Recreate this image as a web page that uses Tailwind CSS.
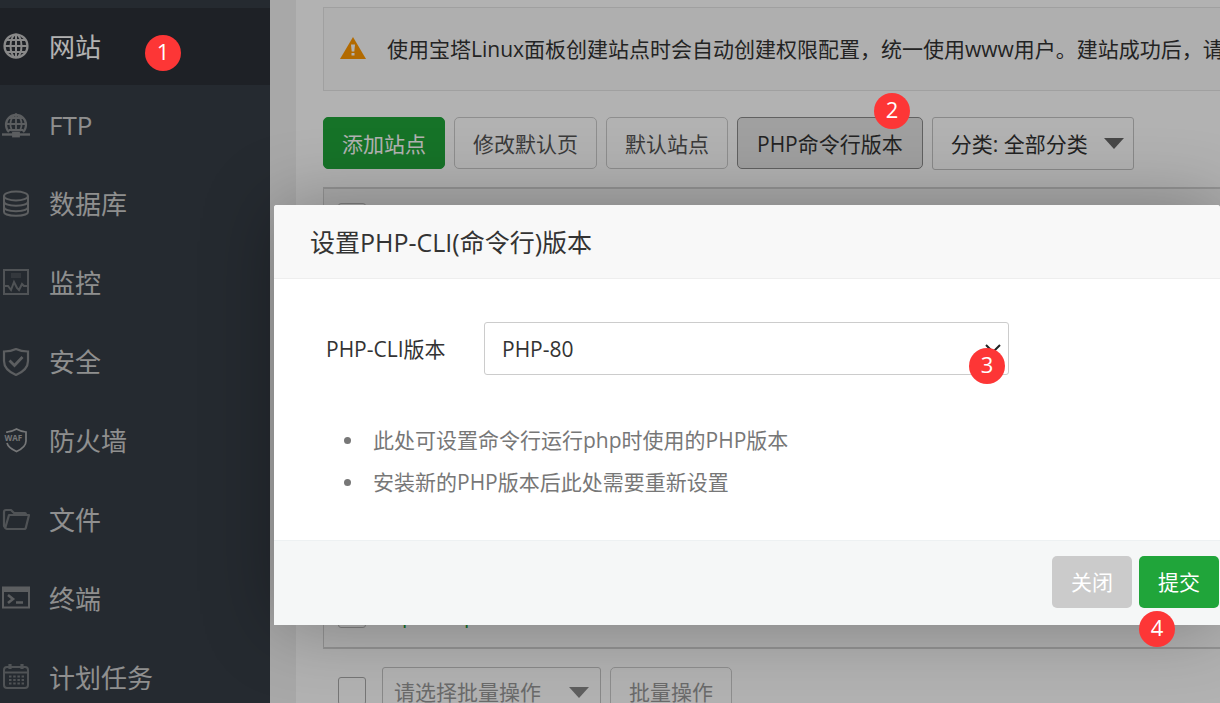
<!DOCTYPE html>
<html lang="zh-CN">
<head>
  <meta charset="UTF-8" />
  <title>网站 - 宝塔Linux面板</title>
  <meta name="viewport" content="width=device-width, initial-scale=1" />
  <script src="https://cdn.jsdelivr.net/npm/@tailwindcss/browser@4"></script>
  <style>
    body {
      font-family: "Open Sans", "Noto Sans CJK SC", sans-serif;
    }
  </style>
</head>
<body class="relative h-screen overflow-hidden bg-[#f1f1f1] text-[21px] leading-[30px] text-[#333]">

  <div class="flex h-full">
    <!-- SIDEBAR -->
    <nav class="w-[270px] shrink-0 bg-[#363d45] pt-2 text-[26px] leading-[36px] text-[#cdcdcd]">
      <a href="#" class="mb-px flex h-[77px] items-center gap-[19px] bg-[#2c3037] pl-[2px] pt-px text-white">
        <svg class="h-[28px] w-[28px] text-[#c4c4c4]" viewBox="0 0 28 28" fill="none" stroke="currentColor" stroke-width="2"><circle cx="14" cy="13" r="11.500" stroke-width="2.200" /><ellipse cx="14" cy="13" rx="5.500" ry="11.500" /><path d="M14 1v24M2 13h24M4 7h20M4 19h20" /></svg>
        网站
      </a>
      <a href="#" class="flex h-[79px] items-center gap-[19px] pl-[2px] pb-px">
        <svg class="h-[28px] w-[28px] text-[#84878a]" viewBox="0 0 28 28" fill="none" stroke="currentColor" stroke-width="1.800"><path d="M7 21a10 10 0 1 1 14 0" stroke-width="2.200" /><path d="M10 20c-3-6-2-13 4-17 6 4 7 11 4 17M14 3v17M4 13h20M6 7h16M7 19h14" /><path d="M0 23.500h28" stroke-width="2.400" /><rect x="11" y="21.500" width="6" height="4" fill="currentColor" /></svg>
        FTP
      </a>
      <a href="#" class="flex h-[79px] items-center gap-[19px] pl-[2px] pb-px">
        <svg class="h-[28px] w-[28px] text-[#84878a]" viewBox="0 0 28 28" fill="none" stroke="currentColor" stroke-width="2"><ellipse cx="14" cy="6" rx="12" ry="4.500" /><path d="M2 6v16c0 5 24 5 24 0V6M2 11.500c0 5.500 24 5.500 24 0M2 17c0 5.500 24 5.500 24 0" /></svg>
        数据库
      </a>
      <a href="#" class="flex h-[79px] items-center gap-[19px] pl-[2px] pb-px">
        <svg class="h-[28px] w-[28px] text-[#73777b]" viewBox="0 0 28 28" fill="none" stroke="currentColor" stroke-width="2"><rect x="2" y="1" width="24" height="24" /><path d="M2 17h4l3 4 3-8 3 6 2 2 3-6 2 2h4" /><path d="M9 6.500h10" stroke-width="5" opacity=".35" /></svg>
        监控
      </a>
      <a href="#" class="flex h-[79px] items-center gap-[19px] pl-[2px] pb-px">
        <svg class="h-[28px] w-[28px] text-[#84878a]" viewBox="0 0 28 28" fill="none" stroke="currentColor" stroke-width="2.200"><path d="M14 1c4 2 8 2.500 12 2.500V13c0 7-5 11-12 14C7 24 2 20 2 13V3.500C6 3.500 10 3 14 1z" /><path d="M7.500 12.500l5 5 8-8.500" stroke-width="2.800" /></svg>
        安全
      </a>
      <a href="#" class="flex h-[79px] items-center gap-[19px] pl-[2px] pb-px">
        <svg class="h-[28px] w-[28px] text-[#a9abad]" viewBox="0 0 28 28" fill="none" stroke="currentColor" stroke-width="1.700"><path d="M5 6V5c4 0 6-1 9.500-3C18 4 20 5 24 5v9c0 5-4 8-9.500 10.500C10 22.500 6 20 5 16" /><text x="2.500" y="14" font-size="8" font-weight="700" fill="currentColor" stroke="none">WAF</text></svg>
        防火墙
      </a>
      <a href="#" class="flex h-[79px] items-center gap-[19px] pl-[2px] pb-px">
        <svg class="h-[28px] w-[28px] text-[#73777b]" viewBox="0 0 28 28" fill="none" stroke="currentColor" stroke-width="2.200" stroke-linejoin="round"><path d="M3.500 22L2 20V6c0-2 1-2 2-2h5l3 3h11c1 0 1 1 1 2" /><path d="M7 9h20l-3 12c0 1-1 2-2 2H5c-1 0-2-1-1.500-2z" /></svg>
        文件
      </a>
      <a href="#" class="flex h-[79px] items-center gap-[19px] pl-[2px] pb-px">
        <svg class="h-[28px] w-[28px] text-[#84878a]" viewBox="0 0 28 28" fill="none" stroke="currentColor" stroke-width="2"><rect x="1" y="2.500" width="26" height="20" /><path d="M1 4.500h26" stroke-width="5" /><path d="M6 10l5 4-5 4M14 17.500h7" stroke-width="2.600" /></svg>
        终端
      </a>
      <a href="#" class="flex h-[79px] items-center gap-[19px] pl-[2px] pb-px">
        <svg class="h-[28px] w-[28px] text-[#73777b]" viewBox="0 0 28 28" fill="none" stroke="currentColor" stroke-width="2"><rect x="2" y="3" width="24" height="21" rx="3" /><path d="M2 8.500h24" /><path d="M8 0v5M20 0v5" stroke-width="3.200" /><path d="M7 12.500h15M7 16h15M7 19.500h15" stroke-dasharray="2.500 1.700" stroke-width="2" /></svg>
        计划任务
      </a>
    </nav>

    <!-- SITE LIST -->
    <main class="min-w-0 flex-1 pl-[26px]">
      <div class="h-full bg-white pl-[27px] pt-[7px]">
        <div class="flex h-[84px] items-center gap-[21px] overflow-hidden whitespace-nowrap border border-r-0 border-[#e6e6e6] bg-[#fbfbfb] pl-4">
          <svg class="h-[24px] w-[26px] shrink-0" viewBox="0 0 26 24"><path d="M13 0l13 22H0z" fill="#f90" /><path d="M11 7.500h4l-.7 7h-2.600z" fill="#fff" /><rect x="11.500" y="16" width="3" height="2.500" fill="#fff" /></svg>
          <p>使用宝塔Linux面板创建站点时会自动创建权限配置，统一使用www用户。建站成功后，请</p>
        </div>

        <div class="mt-[26px] flex items-start gap-[9px] whitespace-nowrap">
          <button class="h-[52px] shrink-0 rounded-[5px] border border-[#20a53a] bg-[#20a53a] px-[18px] pt-[2px] text-white">添加站点</button>
          <button class="h-[52px] shrink-0 rounded-[5px] border border-[#ccc] bg-white px-[18px] pt-[2px] text-[#555]">修改默认页</button>
          <button class="h-[52px] shrink-0 rounded-[5px] border border-[#ccc] bg-white px-[18px] pt-[2px] text-[#555]">默认站点</button>
          <button class="h-[52px] shrink-0 rounded-[5px] border border-[#8c8c8c] bg-[#e6e6e6] px-[19px] pt-[2px]">PHP命令行版本</button>
          <div class="relative shrink-0">
            <select aria-label="分类" class="h-[53px] w-[202px] appearance-none rounded-[3px] border border-[#c4c4c4] bg-white pl-[18px]">
              <option>分类: 全部分类</option>
            </select>
            <svg class="pointer-events-none absolute right-[10px] top-[21px] h-[11px] w-[20px]" viewBox="0 0 20 11"><path d="M0 0h20L10 11z" fill="#666" /></svg>
          </div>
        </div>

        <table class="mt-[17px] w-full border-separate border-spacing-0 border-y-2 border-l border-[#d4d4d4]">
          <thead>
            <tr class="h-[55px] bg-[#f6f6f6]">
              <th class="w-[58px] pl-[14px] text-left"><input type="checkbox" aria-label="全选" class="block h-[28px] w-[28px] appearance-none rounded-[3px] border border-[#bbb]" /></th>
              <th></th>
            </tr>
          </thead>
          <tbody>
            <tr class="h-[403px] align-bottom">
              <td class="pb-[19px] pl-[14px]"><input type="checkbox" aria-label="选择站点" class="block h-[28px] w-[28px] appearance-none rounded-[3px] border border-[#bbb]" /></td>
              <td class="pb-[17px] pl-[20px]"><a href="#" class="block text-[#20a53a]">pdata.pro</a></td>
            </tr>
          </tbody>
        </table>

        <div class="mt-[18px] flex items-start whitespace-nowrap pl-[15px]">
          <input type="checkbox" aria-label="全选站点" class="mr-4 mt-[10px] h-[28px] w-[28px] appearance-none rounded-[3px] border border-[#aaa]" />
          <div class="relative mr-[9px]">
            <select aria-label="批量操作类型" class="h-[50px] w-[219px] appearance-none rounded-[3px] border border-[#c4c4c4] pl-[11px] text-[#999]">
              <option>请选择批量操作</option>
            </select>
            <svg class="pointer-events-none absolute right-[12px] top-[20px] h-[11px] w-[20px]" viewBox="0 0 20 11"><path d="M0 0h20L10 11z" fill="#888" /></svg>
          </div>
          <button class="h-[50px] rounded-[5px] border border-[#ccc] px-[18px] text-[#999]">批量操作</button>
        </div>
      </div>
    </main>
  </div>

  <!-- MASK -->
  <div class="absolute inset-0 bg-black/30"></div>

  <!-- PHP-CLI DIALOG -->
  <div role="dialog" aria-labelledby="dialogTitle" class="absolute left-[274px] right-0 top-[205px] rounded-t-[3px] bg-white shadow-[1px_1px_75px_rgba(0,0,0,0.3)]">
    <h2 id="dialogTitle" class="flex h-[74px] items-center rounded-t-[3px] border-b border-[#eee] bg-[#f8f8f8] pl-9 text-[25px]">设置PHP-CLI(命令行)版本</h2>
    <div class="h-[261px] pt-[43px]">
      <div class="flex items-center pl-[52px]">
        <label for="cliVersion" class="w-[158px] pt-px">PHP-CLI版本</label>
        <div class="relative">
          <select id="cliVersion" class="h-[53px] w-[525px] appearance-none rounded-[3px] border border-[#ccc] bg-white pl-[17px]">
            <option>PHP-80</option>
          </select>
          <svg class="pointer-events-none absolute right-[8px] top-[22px] h-[9px] w-[16px]" viewBox="0 0 16 9" fill="none" stroke="#222" stroke-width="2"><path d="M1 1l7 7 7-7" /></svg>
        </div>
      </div>
      <ul class="mt-[44px] pl-[70px] leading-[42px] text-[#777]">
        <li class="flex items-center gap-[22px]"><span class="h-[7px] w-[7px] rounded-full bg-[#777]"></span>此处可设置命令行运行php时使用的PHP版本</li>
        <li class="flex items-center gap-[22px]"><span class="h-[7px] w-[7px] rounded-full bg-[#777]"></span>安装新的PHP版本后此处需要重新设置</li>
      </ul>
    </div>
    <div class="flex h-[85px] items-start justify-end gap-[7px] border-t border-[#edf1f2] bg-[#f5f7f7] pr-px pt-[15px] text-white">
      <button class="h-[52px] rounded-[5px] bg-[#cbcbcb] px-[19px]">关闭</button>
      <button class="h-[52px] rounded-[5px] bg-[#20a53a] px-[19px]">提交</button>
    </div>
  </div>

  <!-- STEP MARKERS -->
  <span class="absolute left-[145px] top-[35px] flex h-9 w-9 items-center justify-center rounded-full bg-[#fd3636] pb-1 text-[22px] text-white">1</span>
  <span class="absolute left-[874px] top-[93px] flex h-9 w-9 items-center justify-center rounded-full bg-[#fd3636] pb-1 text-[22px] text-white">2</span>
  <span class="absolute left-[969px] top-[348px] flex h-9 w-9 items-center justify-center rounded-full bg-[#fd3636] pb-1 text-[22px] text-white">3</span>
  <span class="absolute left-[1139px] top-[611px] flex h-9 w-9 items-center justify-center rounded-full bg-[#fd3636] pb-1 text-[22px] text-white">4</span>

</body>
</html>
